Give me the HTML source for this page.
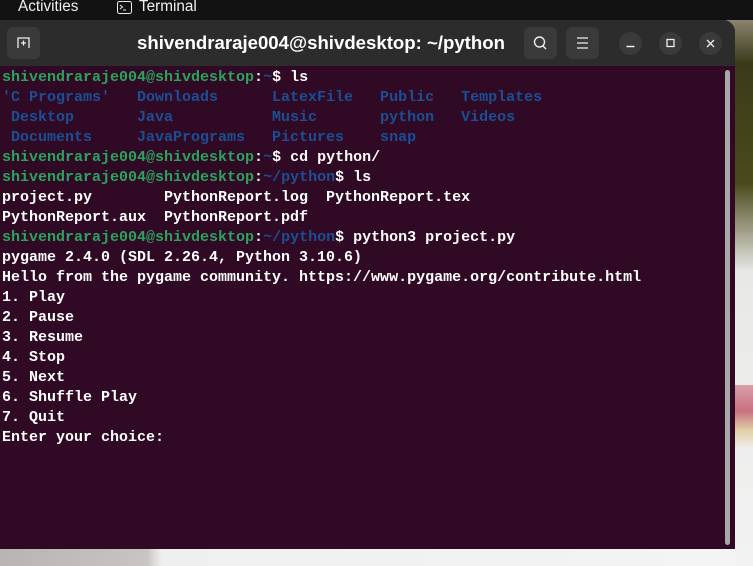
<!DOCTYPE html>
<html><head><style>
html,body{margin:0;padding:0;}
body{width:753px;height:566px;position:relative;overflow:hidden;background:#eeeeee;font-family:"Liberation Sans",sans-serif;}
#bg{position:absolute;left:0;top:20px;width:753px;height:546px;background:linear-gradient(180deg,#8a8470 0%,#3a3a1a 8%,#4a4a1c 30%,#e8e8e6 46%,#f2f2f2 100%);}
#bot{position:absolute;left:0;top:549px;width:735px;height:17px;background:linear-gradient(90deg,#b8b4b4 0%,#c8c4c4 20%,#f0efef 22%,#f4f4f4 100%);}
#flower{position:absolute;left:735px;top:385px;width:18px;height:65px;background:linear-gradient(180deg,#d8a0a8,#c87080 40%,#e0d0a8 70%,#f0f0f0);}
#top{position:absolute;left:0;top:0;width:753px;height:20px;background:#121212;color:#f0f0f0;font-size:15.3px;}
#win{position:absolute;left:0;top:20px;width:735px;height:529px;background:#300a24;border-radius:0 12px 0 0;overflow:hidden;}
#tb{position:absolute;left:0;top:0;width:735px;height:46px;background:#2c2c2c;}
.btn{position:absolute;top:7px;width:33px;height:32px;border-radius:6px;background:#3a3a3a;}
.cbtn{position:absolute;top:12px;width:23px;height:23px;border-radius:50%;background:#3a3a3a;}
#title{position:absolute;left:0;width:642px;top:12px;text-align:center;color:#fff;font-weight:bold;font-size:18.6px;}
#term{position:absolute;left:2px;top:48px;font-family:"Liberation Mono",monospace;font-size:15px;line-height:20px;font-weight:bold;color:#ffffff;white-space:pre;}
.g{color:#2aa35e}.b{color:#1a4f96}
#sb{position:absolute;left:725px;top:70px;width:5px;height:475px;background:#a8a8a8;border-radius:3px;}
</style></head><body>
<div id="bg"></div><div id="flower"></div><div id="bot"></div>
<div id="top">
<span style="position:absolute;left:18px;top:-2px;">Activities</span>
<svg style="position:absolute;left:117px;top:1px" width="15" height="13"><rect x="0.5" y="0.5" width="14" height="12" rx="2" fill="none" stroke="#eee"/><path d="M3 4l2.5 2L3 8M6 9h3" stroke="#eee" fill="none"/></svg>
<span style="position:absolute;left:139px;top:-2px;">Terminal</span>
</div>
<div id="win">
<div id="tb">
<div class="btn" style="left:7px"><svg width="33" height="32"><path d="M11 21V11h11v10M16.5 13.5v5M14 16h5" stroke="#eee" fill="none" stroke-width="1.3"/></svg></div>
<div id="title">shivendraraje004@shivdesktop: ~/python</div>
<div class="btn" style="left:524px"><svg width="33" height="32"><circle cx="15.5" cy="15" r="5" stroke="#eee" fill="none" stroke-width="1.4"/><path d="M19 19l3 3" stroke="#eee" stroke-width="1.4"/></svg></div>
<div class="btn" style="left:566px"><svg width="33" height="32"><path d="M11 11h11M11 16h11M11 21h11" stroke="#eee" stroke-width="1.3"/></svg></div>
<div class="cbtn" style="left:619px"><svg width="23" height="23"><path d="M7.5 14.5h8" stroke="#eee" stroke-width="1.4"/></svg></div>
<div class="cbtn" style="left:659px"><svg width="23" height="23"><rect x="8" y="7.5" width="7" height="7" stroke="#eee" fill="none" stroke-width="1.3"/></svg></div>
<div class="cbtn" style="left:699px"><svg width="23" height="23"><path d="M8 8l7 7M15 8l-7 7" stroke="#eee" stroke-width="1.3"/></svg></div>
</div>
<div id="term"><span class="g">shivendraraje004@shivdesktop</span>:<span class="b">~</span>$ ls
<span class="b">'C Programs'   Downloads      LatexFile   Public   Templates
 Desktop       Java           Music       python   Videos
 Documents     JavaPrograms   Pictures    snap</span>
<span class="g">shivendraraje004@shivdesktop</span>:<span class="b">~</span>$ cd python/
<span class="g">shivendraraje004@shivdesktop</span>:<span class="b">~/python</span>$ ls
project.py        PythonReport.log  PythonReport.tex
PythonReport.aux  PythonReport.pdf
<span class="g">shivendraraje004@shivdesktop</span>:<span class="b">~/python</span>$ python3 project.py
pygame 2.4.0 (SDL 2.26.4, Python 3.10.6)
Hello from the pygame community. https://www.pygame.org/contribute.html
1. Play
2. Pause
3. Resume
4. Stop
5. Next
6. Shuffle Play
7. Quit
Enter your choice: </div>
</div>
<div id="sb"></div>
</body></html>
